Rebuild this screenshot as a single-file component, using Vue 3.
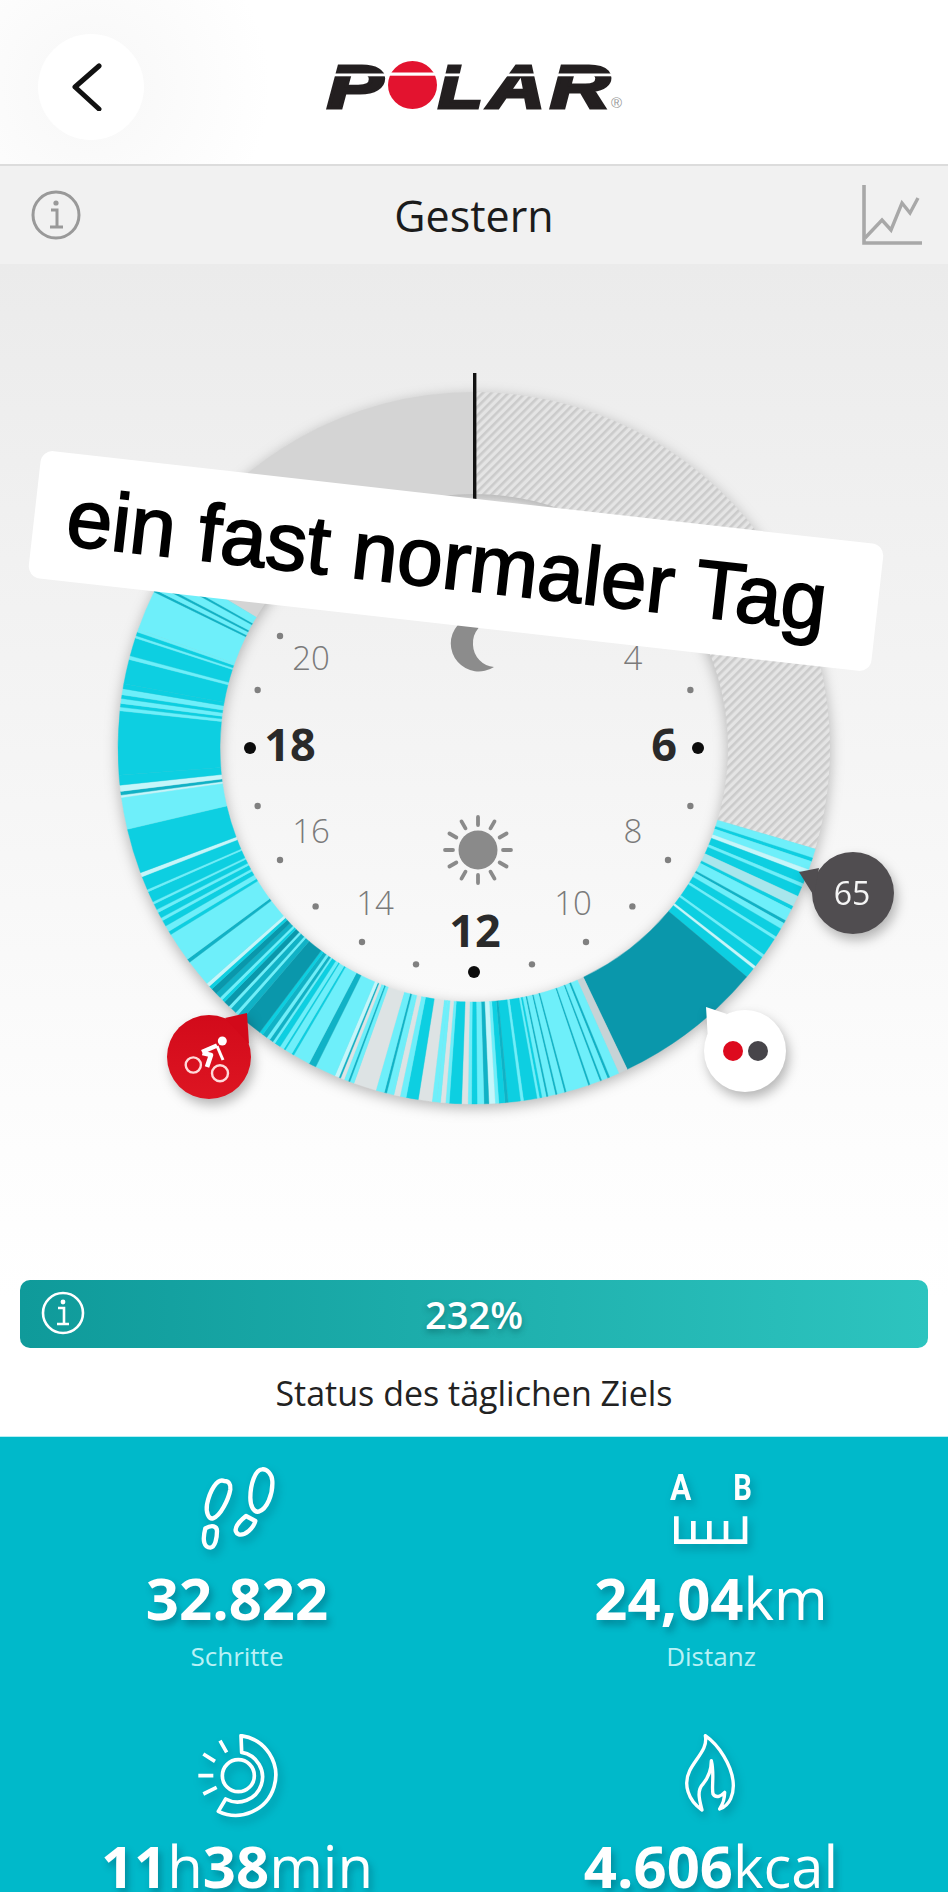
<template>
  <div class="page">
    <header class="top">
      <div class="back-col">
        <button class="back">
          <svg width="30" height="48" viewBox="0 0 30 48">
            <path d="M27 3 L3 24 L27 46" fill="none" stroke="#111" stroke-width="5" stroke-linecap="round" stroke-linejoin="round" />
          </svg>
        </button>
      </div>
      <svg class="logo" width="300" height="50" viewBox="0 0 300 50">
        <text class="logo-txt" x="3" y="45.5" textLength="56" lengthAdjust="spacingAndGlyphs">P</text>
        <text class="logo-txt" x="114" y="45.5" textLength="45" lengthAdjust="spacingAndGlyphs">L</text>
        <text class="logo-txt" x="164" y="45.5" textLength="57" lengthAdjust="spacingAndGlyphs">A</text>
        <text class="logo-txt" x="226" y="45.5" textLength="60" lengthAdjust="spacingAndGlyphs">R</text>
        <rect x="0" y="11.5" width="288" height="2.8" fill="#fff" />
        <ellipse cx="88.5" cy="23" rx="24.5" ry="24" fill="#e3132f" />
        <rect x="62" y="10.5" width="54" height="3.2" fill="#fff" />
        <text class="logo-reg" x="287" y="46">®</text>
      </svg>
    </header>

    <div class="day-bar">
      <svg class="info" width="52" height="52" viewBox="0 0 52 52">
        <circle cx="26" cy="26" r="23" fill="none" stroke="#999" stroke-width="3" />
        <circle cx="26" cy="14" r="2.6" fill="#999" />
        <path d="M21 21 H27 V37 M20 38 H33" fill="none" stroke="#999" stroke-width="3" />
      </svg>
      <span class="day">Gestern</span>
      <svg class="chart" width="66" height="64" viewBox="0 0 66 64">
        <path d="M6 2 V60 H64" fill="none" stroke="#a8a8a8" stroke-width="3.6" />
        <path d="M7 55 L24 37 L33 47 L44 20 L52 30 L60 15" fill="none" stroke="#a8a8a8" stroke-width="3.4" />
      </svg>
    </div>

    <section class="dial">
      <svg width="948" height="1016" viewBox="0 264 948 1016">
        <defs>
          <pattern id="hatch" width="6" height="6" patternUnits="userSpaceOnUse" patternTransform="rotate(45)">
            <rect width="6" height="6" fill="#e4e4e4" />
            <rect width="2.6" height="6" fill="#cbcbcb" />
          </pattern>
          <linearGradient id="faceFill" x1="0" y1="0" x2="0" y2="1">
            <stop offset="0" stop-color="#eeeeee" />
            <stop offset="1" stop-color="#fafafa" />
          </linearGradient>
          <linearGradient id="redFill" x1="0" y1="0" x2="0" y2="1">
            <stop offset="0" stop-color="#d20a1a" />
            <stop offset="1" stop-color="#dd1522" />
          </linearGradient>
        </defs>

        <circle cx="474" cy="748" r="256" fill="url(#faceFill)" />

        <g class="ring">
          <path :d="sector(0, 106.5)" fill="url(#hatch)" />
          <path :d="sector(301, 360)" fill="#d4d4d4" />
          <path v-for="(s, i) in stripes" :key="i" :d="s.d" :fill="s.color" :stroke="s.color" stroke-width="0.4" />
        </g>

        <rect x="473" y="373" width="3.4" height="128" fill="#111" />

        <circle v-for="d in dots" :key="d.h" :cx="d.x" :cy="d.y" :r="d.big ? 6 : 3.2" :fill="d.big ? '#0c0c0c' : '#808080'" />
        <text v-for="l in labels" :key="l.t" :x="l.x" :y="l.y" :class="l.big ? 'hour-big' : 'hour'" text-anchor="middle">{{ l.t }}</text>

        <path d="M494 620 A28 28 0 1 0 494 667 A23 23 0 0 1 473 645 A23 23 0 0 1 494 620 Z" fill="#8c8c8c" />
        <circle cx="478" cy="850" r="19.5" fill="#8a8a8a" />
        <line v-for="(r, i) in rays" :key="i" :x1="r.x1" :y1="r.y1" :x2="r.x2" :y2="r.y2" stroke="#8a8a8a" stroke-width="3.8" stroke-linecap="round" />

        <g class="bubble">
          <circle cx="209" cy="1057" r="42" fill="url(#redFill)" />
          <polygon points="247,1013 225,1018 249,1044" fill="#d20a1a" />
          <circle cx="193.3" cy="1065" r="7.6" fill="none" stroke="#ffd9d9" stroke-width="2.4" />
          <circle cx="220" cy="1073.3" r="8" fill="none" stroke="#ffd9d9" stroke-width="2.4" />
          <circle cx="222.3" cy="1041" r="4.5" fill="#fff" />
          <path d="M217 1046 L223 1060" fill="none" stroke="#fff" stroke-width="3" />
          <path d="M202 1052 L217 1045.5 M202.5 1053 L211 1055 L207 1067" fill="none" stroke="#fff" stroke-width="4.6" stroke-linejoin="round" />
        </g>
        <g class="bubble">
          <circle cx="853" cy="893" r="41" fill="#504d50" />
          <polygon points="799,872 819,868 814,896" fill="#504d50" />
          <text class="bubble-num" x="852" y="905" text-anchor="middle">65</text>
        </g>
        <g class="bubble">
          <circle cx="745" cy="1051" r="41" fill="#fff" />
          <polygon points="706,1007 727,1014 708,1040" fill="#fff" />
          <circle cx="733" cy="1051" r="10" fill="#dd0a1e" />
          <circle cx="758" cy="1051" r="10" fill="#47454a" />
        </g>
      </svg>
    </section>

    <div class="goal-bar">
      <svg class="goal-info" width="46" height="46" viewBox="0 0 46 46">
        <circle cx="23" cy="23" r="20" fill="none" stroke="#fff" stroke-width="2.6" />
        <circle cx="23" cy="12" r="2.4" fill="#fff" />
        <path d="M18 18 H24 V33 M17 34 H29" fill="none" stroke="#fff" stroke-width="2.6" />
      </svg>
      <span>232%</span>
    </div>
    <p class="goal-label">Status des täglichen Ziels</p>

    <section class="stats">
      <div class="stat">
        <svg class="ico" width="80" height="85" viewBox="350 75 240 255">
          <g fill="none" stroke="#fff" stroke-width="13" stroke-linejoin="round">
            <path d="M432 120 C410 110 388 150 380 190 C376 215 385 235 398 232 C420 225 445 175 450 145 C452 130 445 120 432 120 Z" />
            <path d="M375 262 C395 250 410 255 410 270 C410 290 405 318 390 320 C372 320 365 300 375 262 Z" />
            <path d="M545 85 C525 85 510 130 510 170 C510 195 520 215 535 212 C560 205 578 160 576 120 C575 100 560 83 545 85 Z" />
            <path d="M497 225 L525 240 C520 260 495 285 475 280 C458 272 465 250 497 225 Z" />
          </g>
        </svg>
        <div class="value"><b>32.822</b></div>
        <div class="label">Schritte</div>
      </div>
      <div class="stat">
        <svg class="ico" width="100" height="85" viewBox="365 75 300 255">
          <text class="ab" x="392" y="176" textLength="64" lengthAdjust="spacingAndGlyphs">A</text>
          <text class="ab" x="582" y="176" textLength="56" lengthAdjust="spacingAndGlyphs">B</text>
          <path d="M411 226 V302 H617 V226 M462 240 V302 M510 240 V302 M560 240 V302" fill="none" stroke="#fff" stroke-width="14" />
        </svg>
        <div class="value"><b>24,04</b>km</div>
        <div class="label">Distanz</div>
      </div>
      <div class="stat">
        <svg class="ico" width="85" height="85" viewBox="340 880 255 255">
          <g fill="none" stroke="#fff" stroke-width="11">
            <circle cx="470" cy="1005" r="48" />
            <path d="M478 885 A120 120 0 1 1 410 1112 L432 1075 A75 75 0 1 0 480 935 Z" stroke-linejoin="round" />
            <path d="M415 900 L435 935 M365 940 L400 962 M350 1005 L395 1005 M365 1060 L405 1040" />
          </g>
        </svg>
        <div class="value"><b>11</b>h<b>38</b>min</div>
      </div>
      <div class="stat">
        <svg class="ico" width="85" height="85" viewBox="385 880 255 255">
          <path d="M497 885 C505 925 470 950 450 990 C430 1030 445 1080 487 1108 C480 1080 470 1050 490 1030 C510 1005 515 985 515 960 C525 1000 515 1040 520 1060 C530 1075 545 1065 555 1055 C555 1075 550 1090 540 1105 C570 1095 585 1060 580 1020 C575 975 540 915 497 885 Z" fill="none" stroke="#fff" stroke-width="10" stroke-linejoin="round" />
        </svg>
        <div class="value"><b>4.606</b>kcal</div>
      </div>
    </section>

    <div class="caption">ein fast normaler Tag</div>
  </div>
</template>

<script setup>
// Mittelpunkt und Radien des Rings
const CX = 474
const CY = 748
const R = 356
const RI = 254

const pt = (r, a) => {
  const rad = (a * Math.PI) / 180
  return [CX + r * Math.sin(rad), CY - r * Math.cos(rad)]
}

const sector = (a0, a1) => {
  const big = a1 - a0 > 180 ? 1 : 0
  const [x0, y0] = pt(R, a0)
  const [x1, y1] = pt(R, a1)
  const [x2, y2] = pt(RI, a1)
  const [x3, y3] = pt(RI, a0)
  return `M${x0} ${y0} A${R} ${R} 0 ${big} 1 ${x1} ${y1} L${x2} ${y2} A${RI} ${RI} 0 ${big} 0 ${x3} ${y3} Z`
}

const colors = {
  L: '#6eeffa', // hell
  M: '#0dcfe1', // mittel
  D: '#0a97ab', // dunkel
  T: '#10b2c6',
  G: '#dde3e4',
  S: '#c6d3d6',
  W: '#c5f6fa',
  P: '#a8e6ec'
}

// Aktivitätsstreifen: [Endwinkel, Farbe], jeweils ab dem vorherigen Winkel
const bands = [
  [108, 'L'], [108.6, 'M'], [110, 'L'], [110.8, 'W'], [112.4, 'M'], [113, 'L'], [114.6, 'M'], [116.4, 'P'], [117, 'M'],
  [119, 'L'], [119.5, 'T'], [120.5, 'L'], [122, 'M'], [122.5, 'L'], [125.5, 'M'], [126, 'L'], [127.8, 'M'], [128.3, 'W'], [130, 'M'],
  [154.5, 'D'], [156, 'S'], [157.6, 'L'], [158, 'T'], [159, 'L'], [159.3, 'T'], [161, 'L'], [161.3, 'T'], [165, 'L'], [165.3, 'T'],
  [166.5, 'L'], [166.8, 'T'], [168, 'L'], [168.3, 'T'], [169, 'L'], [169.4, 'M'], [169.8, 'L'], [172, 'M'], [172.5, 'L'], [174.5, 'M'], [175, 'T'],
  [176, 'M'], [176.6, 'L'], [177.6, 'W'], [178.4, 'T'], [179.5, 'L'], [180.4, 'M'], [181, 'L'], [182, 'G'], [184, 'M'], [184.6, 'L'], [185.4, 'G'], [186, 'L'], [186.8, 'L'], [189, 'G'],
  [191, 'M'], [192, 'L'], [193, 'G'], [193.4, 'L'], [194.2, 'L'], [194.6, 'T'], [196, 'L'], [199.7, 'G'], [200.4, 'L'], [200.7, 'T'], [201.4, 'L'], [202, 'G'], [202.3, 'T'], [203, 'W'],
  [206.4, 'L'], [207.6, 'T'], [210.4, 'L'], [210.8, 'M'], [212, 'L'], [212.3, 'M'], [213, 'L'], [214, 'M'], [214.4, 'L'], [215, 'T'], [215.6, 'L'], [216.4, 'T'], [217, 'M'], [220.5, 'D'],
  [221.5, 'T'], [222, 'L'], [223, 'T'], [223.5, 'L'], [224.5, 'D'], [225, 'M'], [225.5, 'L'], [226.4, 'T'], [227.4, 'D'], [228, 'M'], [228.6, 'W'], [233, 'L'], [233.6, 'T'], [238.4, 'L'], [239, 'M'],
  [240, 'L'], [241, 'M'], [241.5, 'L'], [242.5, 'M'], [243, 'L'], [244, 'M'], [244.4, 'L'], [246.2, 'M'], [246.6, 'L'], [248.8, 'M'], [249.5, 'W'], [256.8, 'M'], [262, 'L'],
  [262.4, 'W'], [263, 'T'], [264, 'W'], [265.6, 'M'], [276, 'M'], [276.6, 'L'], [277.2, 'M'], [278, 'L'], [278.6, 'M'], [279.6, 'L'], [280.4, 'M'], [284.4, 'M'], [285, 'L'],
  [288, 'M'], [288.4, 'L'], [289, 'M'], [289.5, 'L'], [296, 'L'], [296.4, 'T'], [297.2, 'L'], [297.6, 'T'], [299, 'L'], [299.4, 'T'], [301, 'L']
]

let from = 106.5
const stripes = bands.map(([to, c]) => {
  const s = { d: sector(from, to), color: colors[c] }
  from = to
  return s
})

const dots = Array.from({ length: 24 }, (_, h) => {
  const [x, y] = pt(224, h * 15)
  return { h, x, y, big: h % 6 === 0 && h !== 0 }
})

const labels = [
  { t: '20', x: 311, y: 670 },
  { t: '4', x: 633, y: 670 },
  { t: '18', x: 290, y: 761, big: true },
  { t: '6', x: 664, y: 761, big: true },
  { t: '16', x: 311, y: 843 },
  { t: '8', x: 633, y: 843 },
  { t: '14', x: 375, y: 915 },
  { t: '10', x: 573, y: 915 },
  { t: '12', x: 475, y: 947, big: true }
]

const rays = Array.from({ length: 12 }, (_, i) => {
  const a = (i * 30 * Math.PI) / 180
  return {
    x1: 478 + 25 * Math.sin(a),
    y1: 850 - 25 * Math.cos(a),
    x2: 478 + 33 * Math.sin(a),
    y2: 850 - 33 * Math.cos(a)
  }
})
</script>

<style scoped>
.page {
  position: relative;
  width: 948px;
  height: 1892px;
  overflow: hidden;
  font-family: "Open Sans", sans-serif;
  background: linear-gradient(#ebebeb 264px, #fdfdfd 1150px, #fff 1300px);
}

.top {
  height: 166px;
  display: grid;
  grid-template-columns: 1fr 300px 1fr;
  align-items: center;
  padding-top: 9px;
  box-sizing: border-box;
  background: radial-gradient(circle at 90px 87px, #f7f7f7 0, #fbfbfb 90px, #fff 180px);
  border-bottom: 2px solid #dcdcdc;
}

.back-col {
  padding-left: 38px;
}

.back {
  width: 106px;
  height: 106px;
  border: none;
  border-radius: 50%;
  background: #fff;
  display: flex;
  align-items: center;
  justify-content: center;
  padding: 0 8px 0 0;
}

.logo {
  display: block;
  overflow: visible;
}

.logo-txt {
  font-family: "Liberation Sans", sans-serif;
  font-weight: 700;
  font-style: italic;
  font-size: 61px;
  fill: #231f20;
  stroke: #231f20;
  stroke-width: 3px;
}

.logo-reg {
  font-family: "Liberation Sans", sans-serif;
  font-size: 15px;
  fill: #999;
}

.day-bar {
  height: 98px;
  display: flex;
  align-items: center;
  justify-content: space-between;
  padding: 0 24px 0 30px;
  background: #f1f1f1;
  position: relative;
}

.day {
  font-size: 43px;
  color: #1b1b1b;
  position: absolute;
  left: 0;
  right: 0;
  text-align: center;
}

.dial {
  height: 1016px;
}

.dial svg {
  display: block;
}

.ring {
  filter: drop-shadow(0 4px 7px rgba(0, 0, 0, 0.28));
}

.bubble {
  filter: drop-shadow(3px 6px 6px rgba(0, 0, 0, 0.28));
}

.hour {
  font-size: 33px;
  font-weight: 300;
  fill: #7a7a7a;
}

.hour-big {
  font-size: 45px;
  font-weight: 700;
  fill: #2a2a2a;
}

.bubble-num {
  font-size: 32px;
  fill: #f5f5f5;
}

.goal-bar {
  height: 68px;
  margin: 0 20px;
  border-radius: 10px;
  background: linear-gradient(90deg, #0f9a9a, #2dc4bf);
  display: flex;
  align-items: center;
  justify-content: center;
  position: relative;
}

.goal-bar span {
  color: #fff;
  font-size: 38px;
  font-weight: 600;
  text-shadow: 0 3px 6px rgba(0, 70, 70, 0.45);
}

.goal-info {
  position: absolute;
  left: 20px;
  top: 10px;
}

.goal-label {
  margin: 0;
  height: 88px;
  line-height: 90px;
  text-align: center;
  font-size: 34px;
  color: #222;
}

.stats {
  height: 456px;
  box-sizing: border-box;
  padding-top: 29px;
  background: #00b9ca;
  border-top: 1px solid #b5eef3;
  display: grid;
  grid-template-columns: 1fr 1fr;
  grid-auto-rows: 268px;
  justify-items: center;
  color: #fff;
}

.stat {
  display: flex;
  flex-direction: column;
  align-items: center;
}

.ico {
  display: block;
  filter: drop-shadow(3px 5px 4px rgba(0, 70, 90, 0.35));
}

.ab {
  font-family: Roboto, sans-serif;
  font-weight: 700;
  font-size: 112px;
  fill: #fff;
}

.value {
  margin-top: 8px;
  font-size: 58px;
  line-height: 78px;
  white-space: nowrap;
  text-shadow: 3px 5px 7px rgba(0, 70, 90, 0.4);
}

.value b {
  font-weight: 700;
}

.label {
  margin-top: 1px;
  font-size: 26px;
  line-height: 36px;
  color: #b9f1f6;
}

.caption {
  position: absolute;
  left: 32px;
  top: 497px;
  width: 848px;
  height: 128px;
  transform: rotate(6.44deg);
  background: #fff;
  border-radius: 12px;
  display: flex;
  align-items: center;
  justify-content: center;
  padding-right: 18px;
  box-sizing: border-box;
  font-family: "Liberation Sans", sans-serif;
  font-size: 82px;
  color: #000;
  -webkit-text-stroke: 1.8px #000;
  white-space: nowrap;
}
</style>
